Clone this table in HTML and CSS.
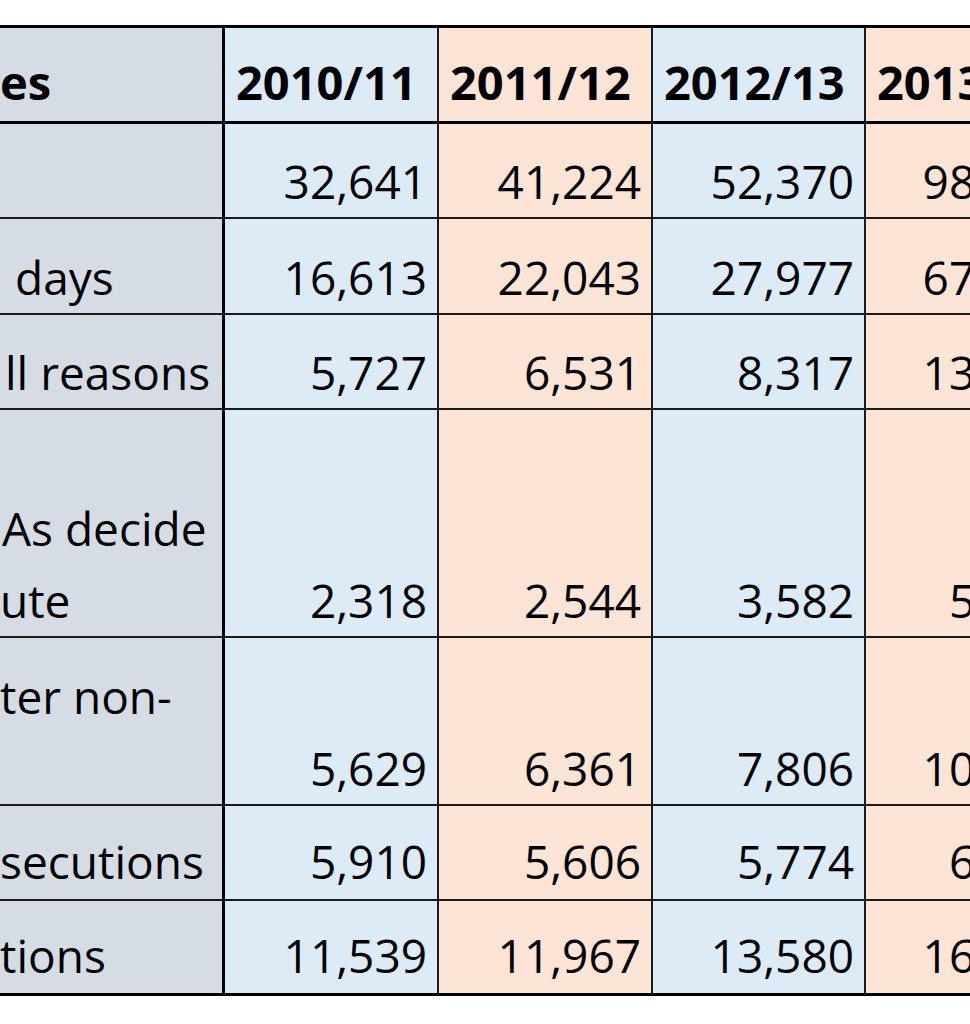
FILE: index.html
```html
<!DOCTYPE html>
<html lang="en">
<head>
<meta charset="utf-8">
<title>Table</title>
<link rel="stylesheet" href="styles.css">
</head>
<body>
<div class="sheet">
  <div class="grid">
    <div class="cell label head"><span class="txt">es</span></div>
    <div class="cell blue head"><span class="txt">2010/11</span></div>
    <div class="cell peach head"><span class="txt">2011/12</span></div>
    <div class="cell blue head"><span class="txt">2012/13</span></div>
    <div class="cell peach head"><span class="txt">2013/14</span></div>

    <div class="cell label r1"><span class="txt">&nbsp;</span></div>
    <div class="cell blue num r1"><span class="txt">32,641</span></div>
    <div class="cell peach num r1"><span class="txt">41,224</span></div>
    <div class="cell blue num r1"><span class="txt">52,370</span></div>
    <div class="cell peach num r1"><span class="txt">98,465</span></div>

    <div class="cell label r2"><span class="txt ind-days">days</span></div>
    <div class="cell blue num r2"><span class="txt">16,613</span></div>
    <div class="cell peach num r2"><span class="txt">22,043</span></div>
    <div class="cell blue num r2"><span class="txt">27,977</span></div>
    <div class="cell peach num r2"><span class="txt">67,104</span></div>

    <div class="cell label r3"><span class="txt ind-ll">ll reasons</span></div>
    <div class="cell blue num r3"><span class="txt">5,727</span></div>
    <div class="cell peach num r3"><span class="txt">6,531</span></div>
    <div class="cell blue num r3"><span class="txt">8,317</span></div>
    <div class="cell peach num r3"><span class="txt">13,452</span></div>

    <div class="cell label r4"><span class="txt"><span class="ind-as">As decide</span><br>ute</span></div>
    <div class="cell blue num r4"><span class="txt">2,318</span></div>
    <div class="cell peach num r4"><span class="txt">2,544</span></div>
    <div class="cell blue num r4"><span class="txt">3,582</span></div>
    <div class="cell peach num r4"><span class="txt">5,386</span></div>

    <div class="cell label r5"><span class="txt">ter non-<br>&nbsp;</span></div>
    <div class="cell blue num r5"><span class="txt">5,629</span></div>
    <div class="cell peach num r5"><span class="txt">6,361</span></div>
    <div class="cell blue num r5"><span class="txt">7,806</span></div>
    <div class="cell peach num r5"><span class="txt">10,527</span></div>

    <div class="cell label r6"><span class="txt">secutions</span></div>
    <div class="cell blue num r6"><span class="txt">5,910</span></div>
    <div class="cell peach num r6"><span class="txt">5,606</span></div>
    <div class="cell blue num r6"><span class="txt">5,774</span></div>
    <div class="cell peach num r6"><span class="txt">6,254</span></div>

    <div class="cell label r7"><span class="txt">tions</span></div>
    <div class="cell blue num r7"><span class="txt">11,539</span></div>
    <div class="cell peach num r7"><span class="txt">11,967</span></div>
    <div class="cell blue num r7"><span class="txt">13,580</span></div>
    <div class="cell peach num r7"><span class="txt">16,781</span></div>
  </div>
</div>
</body>
</html>
```

FILE: styles.css
```css
html, body {
  margin: 0;
  padding: 0;
  background: #ffffff;
  overflow: hidden;
}

body {
  width: 970px;
  height: 1024px;
  font-family: "Open Sans", "Liberation Sans", sans-serif;
  color: #000000;
}

.sheet {
  padding-top: 25px;
  width: 970px;
  overflow: hidden;
}

.grid {
  display: grid;
  grid-template-columns: 225px 214px 214px 213px 212px;
  grid-template-rows: 96px 95px 96px 95px 228px 168px 95px 95px;
  width: 1078px;
  border-top: 3px solid #000;
  box-sizing: content-box;
}

.cell {
  box-sizing: border-box;
  display: flex;
  align-items: flex-end;
  border-right: 2px solid #1a1a1a;
  border-bottom: 2px solid #1a1a1a;
  font-size: 46px;
  line-height: 72px;
  white-space: nowrap;
  overflow: hidden;
}

.txt {
  display: block;
}

.label {
  background: #d6dce4;
  border-right: 3px solid #000;
  padding-left: 0;
}

.blue {
  background: #ddebf7;
}

.peach {
  background: #fce4d6;
}

.head {
  font-weight: 700;
  font-size: 47px;
  border-bottom: 3px solid #000;
  padding-left: 11px;
  padding-bottom: 3px;
}

.head.label {
  padding-left: 0;
}

.num {
  justify-content: flex-end;
  padding-right: 10px;
}

.r6, .r7 {
  padding-bottom: 2px;
}

.r7 {
  border-bottom: 3px solid #000;
}

.ind-days {
  padding-left: 15px;
}

.ind-ll {
  padding-left: 5px;
}

.ind-as {
  padding-left: 2px;
}
```
